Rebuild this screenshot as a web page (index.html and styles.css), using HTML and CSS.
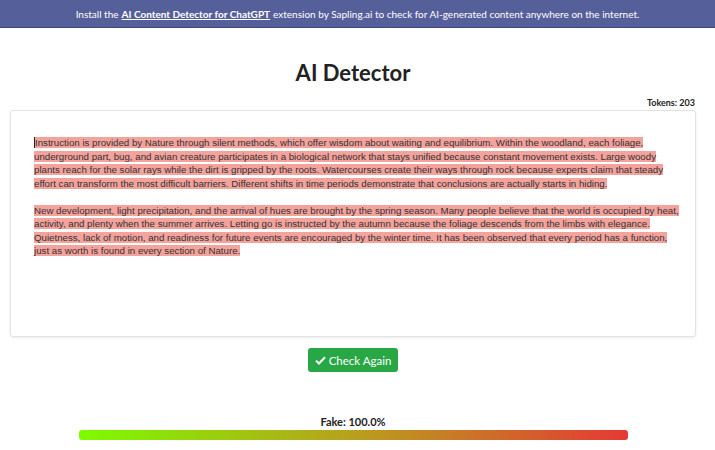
FILE: index.html
```html
<!DOCTYPE html>
<html lang="en">
<head>
    <meta charset="UTF-8">
    <meta name="viewport" content="width=device-width, initial-scale=1.0">
    <title>AI Detector</title>
    <link rel="stylesheet" href="styles.css">
</head>
<body>
    <div class="banner">
        Install the <a href="#">AI Content Detector for ChatGPT </a> extension by Sapling.ai to check for AI-generated content anywhere on the internet.
    </div>

    <div class="main-cont">
        <h1 class="title">AI Detector</h1>

        <div class="tokens">Tokens: 203</div>

        <div class="editor-cont">
            <p class="para"><span class="caret"></span><span class="fake">Instruction is provided by Nature through silent methods, which offer wisdom about waiting and equilibrium. Within the woodland, each foliage, underground part, bug, and avian creature participates in a biological network that stays unified because constant movement exists. Large woody plants reach for the solar rays while the dirt is gripped by the roots. Watercourses create their ways through rock because experts claim that steady effort can transform the most difficult barriers. Different shifts in time periods demonstrate that conclusions are actually starts in hiding.</span></p>
            <p class="para"><span class="fake">New development, light precipitation, and the arrival of hues are brought by the spring season. Many people believe that the world is occupied by heat, activity, and plenty when the summer arrives. Letting go is instructed by the autumn because the foliage descends from the limbs with elegance. Quietness, lack of motion, and readiness for future events are encouraged by the winter time. It has been observed that every period has a function, just as worth is found in every section of Nature.</span></p>
        </div>

        <div class="btn-cont">
            <div class="check-btn">
                <svg width="11" height="9" viewBox="0 0 11 9"><path d="M1 4.6 L4 7.5 L10 1.3" fill="none" stroke="#fff" stroke-width="2"/></svg>
                Check Again
            </div>
        </div>

        <div class="score-cont">
            <div class="score-label">Fake: 100.0%</div>
            <div class="score-bar"></div>
        </div>
    </div>
</body>
</html>
```

FILE: styles.css
```css
* {
    box-sizing: border-box;
}

body {
    margin: 0;
    padding: 0;
    background-color: #fff;
    font-family: Lato, "Open Sans", sans-serif;
    color: #222;
}

.banner {
    height: 28px;
    background-color: #55609a;
    color: #fff;
    font-size: 10px;
    display: flex;
    align-items: center;
    justify-content: center;
    border-bottom: 1px solid #3f4a80;
}

.banner a {
    color: #fff;
    font-weight: 700;
    margin: 0 3px;
}

.main-cont {
    width: 706px;
    padding: 0 10px;
}

.title {
    margin: 30px 0 0 0;
    height: 30px;
    text-align: center;
    font-size: 22px;
    font-weight: 700;
    line-height: 30px;
    color: #222;
}

.tokens {
    margin-top: 10px;
    text-align: right;
    font-size: 9px;
    font-weight: 700;
    line-height: 10px;
    padding-right: 1px;
}

.editor-cont {
    margin-top: 2px;
    height: 227px;
    border: 1px solid #e3e3e3;
    border-radius: 3px;
    box-shadow: 0 1px 3px rgba(0, 0, 0, 0.08);
    padding: 25px 16px 0 23px;
    font-family: "Liberation Sans", Arial, sans-serif;
    font-size: 9.7px;
    line-height: 13.5px;
    color: #333;
}

.para {
    margin: 0 0 13.5px 0;
}

.fake {
    background-color: #f4a29c;
}

.caret {
    display: inline-block;
    width: 1px;
    height: 11px;
    background-color: #222;
    vertical-align: -2px;
}

.btn-cont {
    display: flex;
    justify-content: center;
    margin-top: 11px;
}

.check-btn {
    display: flex;
    align-items: center;
    gap: 3px;
    height: 24px;
    padding: 0 7px;
    background-color: #28a745;
    border-radius: 3px;
    color: #fff;
    font-size: 11.5px;
}

.score-cont {
    margin-top: 44px;
    display: flex;
    flex-direction: column;
    align-items: center;
}

.score-label {
    font-size: 11px;
    font-weight: 700;
    line-height: 12px;
}

.score-bar {
    margin-top: 2px;
    width: 549px;
    height: 10px;
    border-radius: 3px;
    background: linear-gradient(to right, #7cfc00, #b8a01c 50%, #e53935);
}
```
